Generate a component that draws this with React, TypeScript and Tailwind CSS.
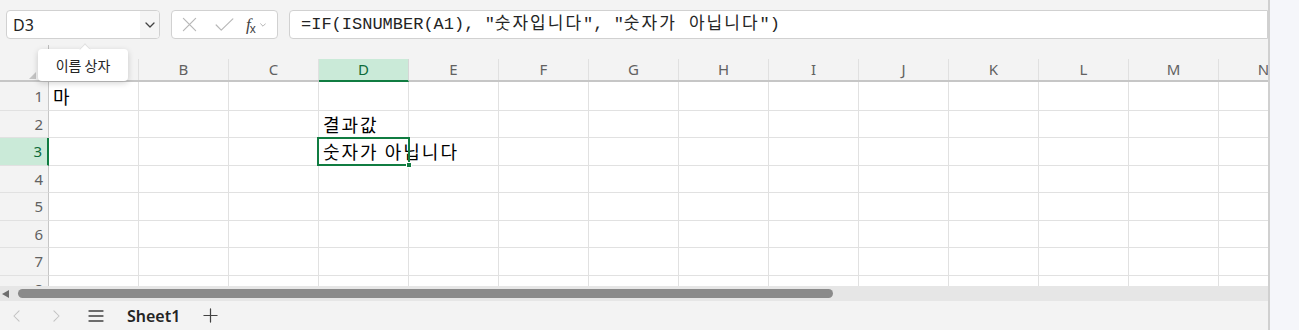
import React from 'react';

const COLS = ['A', 'B', 'C', 'D', 'E', 'F', 'G', 'H', 'I', 'J', 'K', 'L', 'M', 'N'];

const ROWS: { n: number; h: string }[] = [
  { n: 1, h: 'h-[29px]' },
  { n: 2, h: 'h-[27px]' },
  { n: 3, h: 'h-[28px]' },
  { n: 4, h: 'h-[27px]' },
  { n: 5, h: 'h-[28px]' },
  { n: 6, h: 'h-[27px]' },
  { n: 7, h: 'h-[28px]' },
  { n: 8, h: 'h-[28px]' },
];

const cells: Record<string, string> = {
  A1: '마',
  D2: '결과값',
  D3: '숫자가 아닙니다',
};

const ui = "font-['Noto_Sans','Noto_Sans_CJK_KR',sans-serif]";
const kr = "font-['Noto_Sans_CJK_KR','Noto_Sans',sans-serif]";

const Chevron = ({ className }: { className?: string }) => (
  <svg viewBox="0 0 10 6" className={className} fill="none" stroke="currentColor" strokeWidth="1.3" strokeLinecap="round" strokeLinejoin="round">
    <path d="M1 1l4 4 4-4" />
  </svg>
);

// korean runs in the formula are a bit wider than the mono font's fallback
const Ko = ({ children }: { children: React.ReactNode }) => (
  <span className="tracking-[2px]">{children}</span>
);

const FormulaBar: React.FC = () => (
  <div className="flex items-center h-[29px] mt-[10px] pl-[6px]">
    {/* name box */}
    <div className="flex h-full w-[154px] rounded-[4px] border border-[#d1d1d1] bg-white overflow-hidden">
      <div className={`flex-1 flex items-center pl-[6px] text-[16px] text-[#242424] ${ui}`}>D3</div>
      <div className="w-[19px] bg-[#f5f5f5] flex items-center justify-center text-[#424242]">
        <Chevron className="w-[10px] h-[6px]" />
      </div>
    </div>

    {/* cancel / enter / fx */}
    <div className="ml-[11px] flex items-center h-full w-[107px] rounded-[4px] border border-[#d1d1d1] bg-white">
      <svg viewBox="0 0 16 16" className="ml-[10px] w-[15px] h-[15px] text-[#b8b8b8]" fill="none" stroke="currentColor" strokeWidth="1.3" strokeLinecap="round">
        <path d="M1.5 1.5l13 13M14.5 1.5l-13 13" />
      </svg>
      <svg viewBox="0 0 20 14" className="ml-[18px] w-[19px] h-[13px] text-[#b8b8b8]" fill="none" stroke="currentColor" strokeWidth="1.3" strokeLinecap="round" strokeLinejoin="round">
        <path d="M1 7.5l5.5 5.5L19 1" />
      </svg>
      <div className="ml-[12px] flex items-end text-[#424242] leading-none">
        <span className="font-['Liberation_Serif',serif] italic text-[17px]">f</span>
        <span className="font-['Liberation_Sans',sans-serif] text-[12px] -ml-[1px] mb-[-2px]">x</span>
      </div>
      <Chevron className="ml-[4px] w-[6px] h-[4px] text-[#a0a0a0]" />
    </div>

    {/* formula input */}
    <div className="ml-[11px] flex-1 h-full flex items-center pl-[11px] rounded-l-[4px] border border-[#d1d1d1] bg-white text-[17px] text-[#242424] whitespace-pre font-['Liberation_Mono','Noto_Sans_CJK_KR',monospace]">
      =IF(ISNUMBER(A1), "<Ko>숫자입니다</Ko>", "<Ko>숫자가 아닙니다</Ko>")
    </div>
  </div>
);

const HeaderRow: React.FC = () => (
  <div className="flex h-[23px] border-b-2 border-[#c6c6c6]">
    <div className="w-[49px] shrink-0 border-r border-[#d6d6d6] flex items-end justify-end pr-[12px] pb-[1px]">
      <div className="w-0 h-0 border-l-[7px] border-l-transparent border-b-[7px] border-b-[#c4c4c4]" />
    </div>
    {COLS.map(c => {
      const sel = c === 'D';
      return (
        <div
          key={c}
          className={`w-[90px] shrink-0 flex items-center justify-center text-[15px] ${ui} ${
            sel
              ? 'bg-[#caead8] text-[#0e6b3a] border-r border-[#d6d6d6] -mb-[2px] border-b-2 border-b-[#107c41]'
              : 'text-[#616161] border-r border-[#e0e0e0]'
          }`}
        >
          {c}
        </div>
      );
    })}
  </div>
);

const GridRow: React.FC<{ n: number; h: string }> = ({ n, h }) => {
  const selRow = n === 3;
  return (
    <div className={`flex ${h} shrink-0`}>
      <div
        className={`w-[49px] shrink-0 flex items-center justify-end pr-[5px] text-[15px] border-b ${ui} ${
          selRow
            ? 'bg-[#caead8] text-[#0e6b3a] border-r-2 border-r-[#107c41] border-b-[#e1e1e1]'
            : 'bg-[#f3f3f3] text-[#616161] border-r border-r-[#c6c6c6] border-b-[#e1e1e1]'
        }`}
      >
        {n}
      </div>
      {COLS.map(c => {
        const key = `${c}${n}`;
        const val = cells[key];
        const active = key === 'D3';
        return (
          <div key={key} className="relative w-[90px] shrink-0 border-r border-b border-[#e1e1e1] bg-white">
            {val && (
              <div className={`absolute left-[4px] top-0 bottom-0 flex items-center whitespace-pre text-[18px] tracking-[2px] text-black z-10 ${kr}`}>
                {val}
              </div>
            )}
            {active && (
              <div className="absolute -left-[2px] -top-[1px] w-[93px] h-[29px] border-2 border-[#107c41] z-20">
                <div className="absolute -right-[4px] -bottom-[4px] w-[6px] h-[6px] bg-[#107c41] border border-white" />
              </div>
            )}
          </div>
        );
      })}
    </div>
  );
};

const App: React.FC = () => {
  return (
    <div className="w-[1299px] h-[330px] flex bg-[#f3f3f3] overflow-hidden">
      <div className="relative w-[1268px] shrink-0 flex flex-col overflow-hidden">
        <div className="h-[59px] shrink-0 bg-[#f3f3f3] relative">
          <FormulaBar />
          <div className="absolute left-[48px] top-[45px] w-[1px] h-[7px] bg-[#bdbdbd]" />
        </div>

        <div className="bg-[#f3f3f3]">
          <HeaderRow />
        </div>

        <div className="flex flex-col h-[204px] overflow-hidden">
          {ROWS.map(r => (
            <GridRow key={r.n} n={r.n} h={r.h} />
          ))}
        </div>

        {/* horizontal scrollbar */}
        <div className="h-[15px] shrink-0 bg-[#e6e6e6] flex items-center">
          <svg viewBox="0 0 7 8" className="ml-[2px] w-[7px] h-[8px] text-[#6e6e6e]" fill="currentColor">
            <path d="M7 0v8L0 4z" />
          </svg>
          <div className="ml-[9px] w-[815px] h-[9px] rounded-full bg-[#8a8a8a]" />
        </div>

        {/* sheet tabs */}
        <div className="flex-1 bg-[#f3f3f3] flex items-center">
          <svg viewBox="0 0 8 14" className="ml-[13px] w-[7px] h-[12px] text-[#c2c2c2]" fill="none" stroke="currentColor" strokeWidth="1.2" strokeLinecap="round" strokeLinejoin="round">
            <path d="M7 1L1 7l6 6" />
          </svg>
          <svg viewBox="0 0 8 14" className="ml-[33px] w-[7px] h-[12px] text-[#c2c2c2]" fill="none" stroke="currentColor" strokeWidth="1.2" strokeLinecap="round" strokeLinejoin="round">
            <path d="M1 1l6 6-6 6" />
          </svg>
          <svg viewBox="0 0 16 12" className="ml-[28px] w-[16px] h-[12px] text-[#424242]" fill="none" stroke="currentColor" strokeWidth="1.3" strokeLinecap="round">
            <path d="M1 1h14M1 6h14M1 11h14" />
          </svg>
          <span className={`ml-[23px] text-[16px] font-semibold text-[#242424] ${ui}`}>Sheet1</span>
          <svg viewBox="0 0 16 16" className="ml-[23px] w-[15px] h-[15px] text-[#424242]" fill="none" stroke="currentColor" strokeWidth="1.3" strokeLinecap="round">
            <path d="M8 1v14M1 8h14" />
          </svg>
        </div>

        {/* name box tooltip */}
        <div className="absolute left-[38px] top-[49px] w-[90px] h-[32px] z-30">
          <div className="absolute left-[43px] -top-[4px] w-[8px] h-[8px] rotate-45 bg-white border-l border-t border-[#e0e0e0]" />
          <div className={`w-full h-full rounded-[4px] bg-white shadow-[0_2px_6px_rgba(0,0,0,0.18)] flex items-center justify-center text-[14px] text-[#242424] ${kr}`}>
            이름 상자
          </div>
          <div className="absolute left-[44px] top-0 w-[8px] h-[2px] bg-white" />
        </div>
      </div>

      <div className="flex-1 border-l-2 border-[#d0d0d0] bg-[#f5f6fa]" />
    </div>
  );
};

export default App;
